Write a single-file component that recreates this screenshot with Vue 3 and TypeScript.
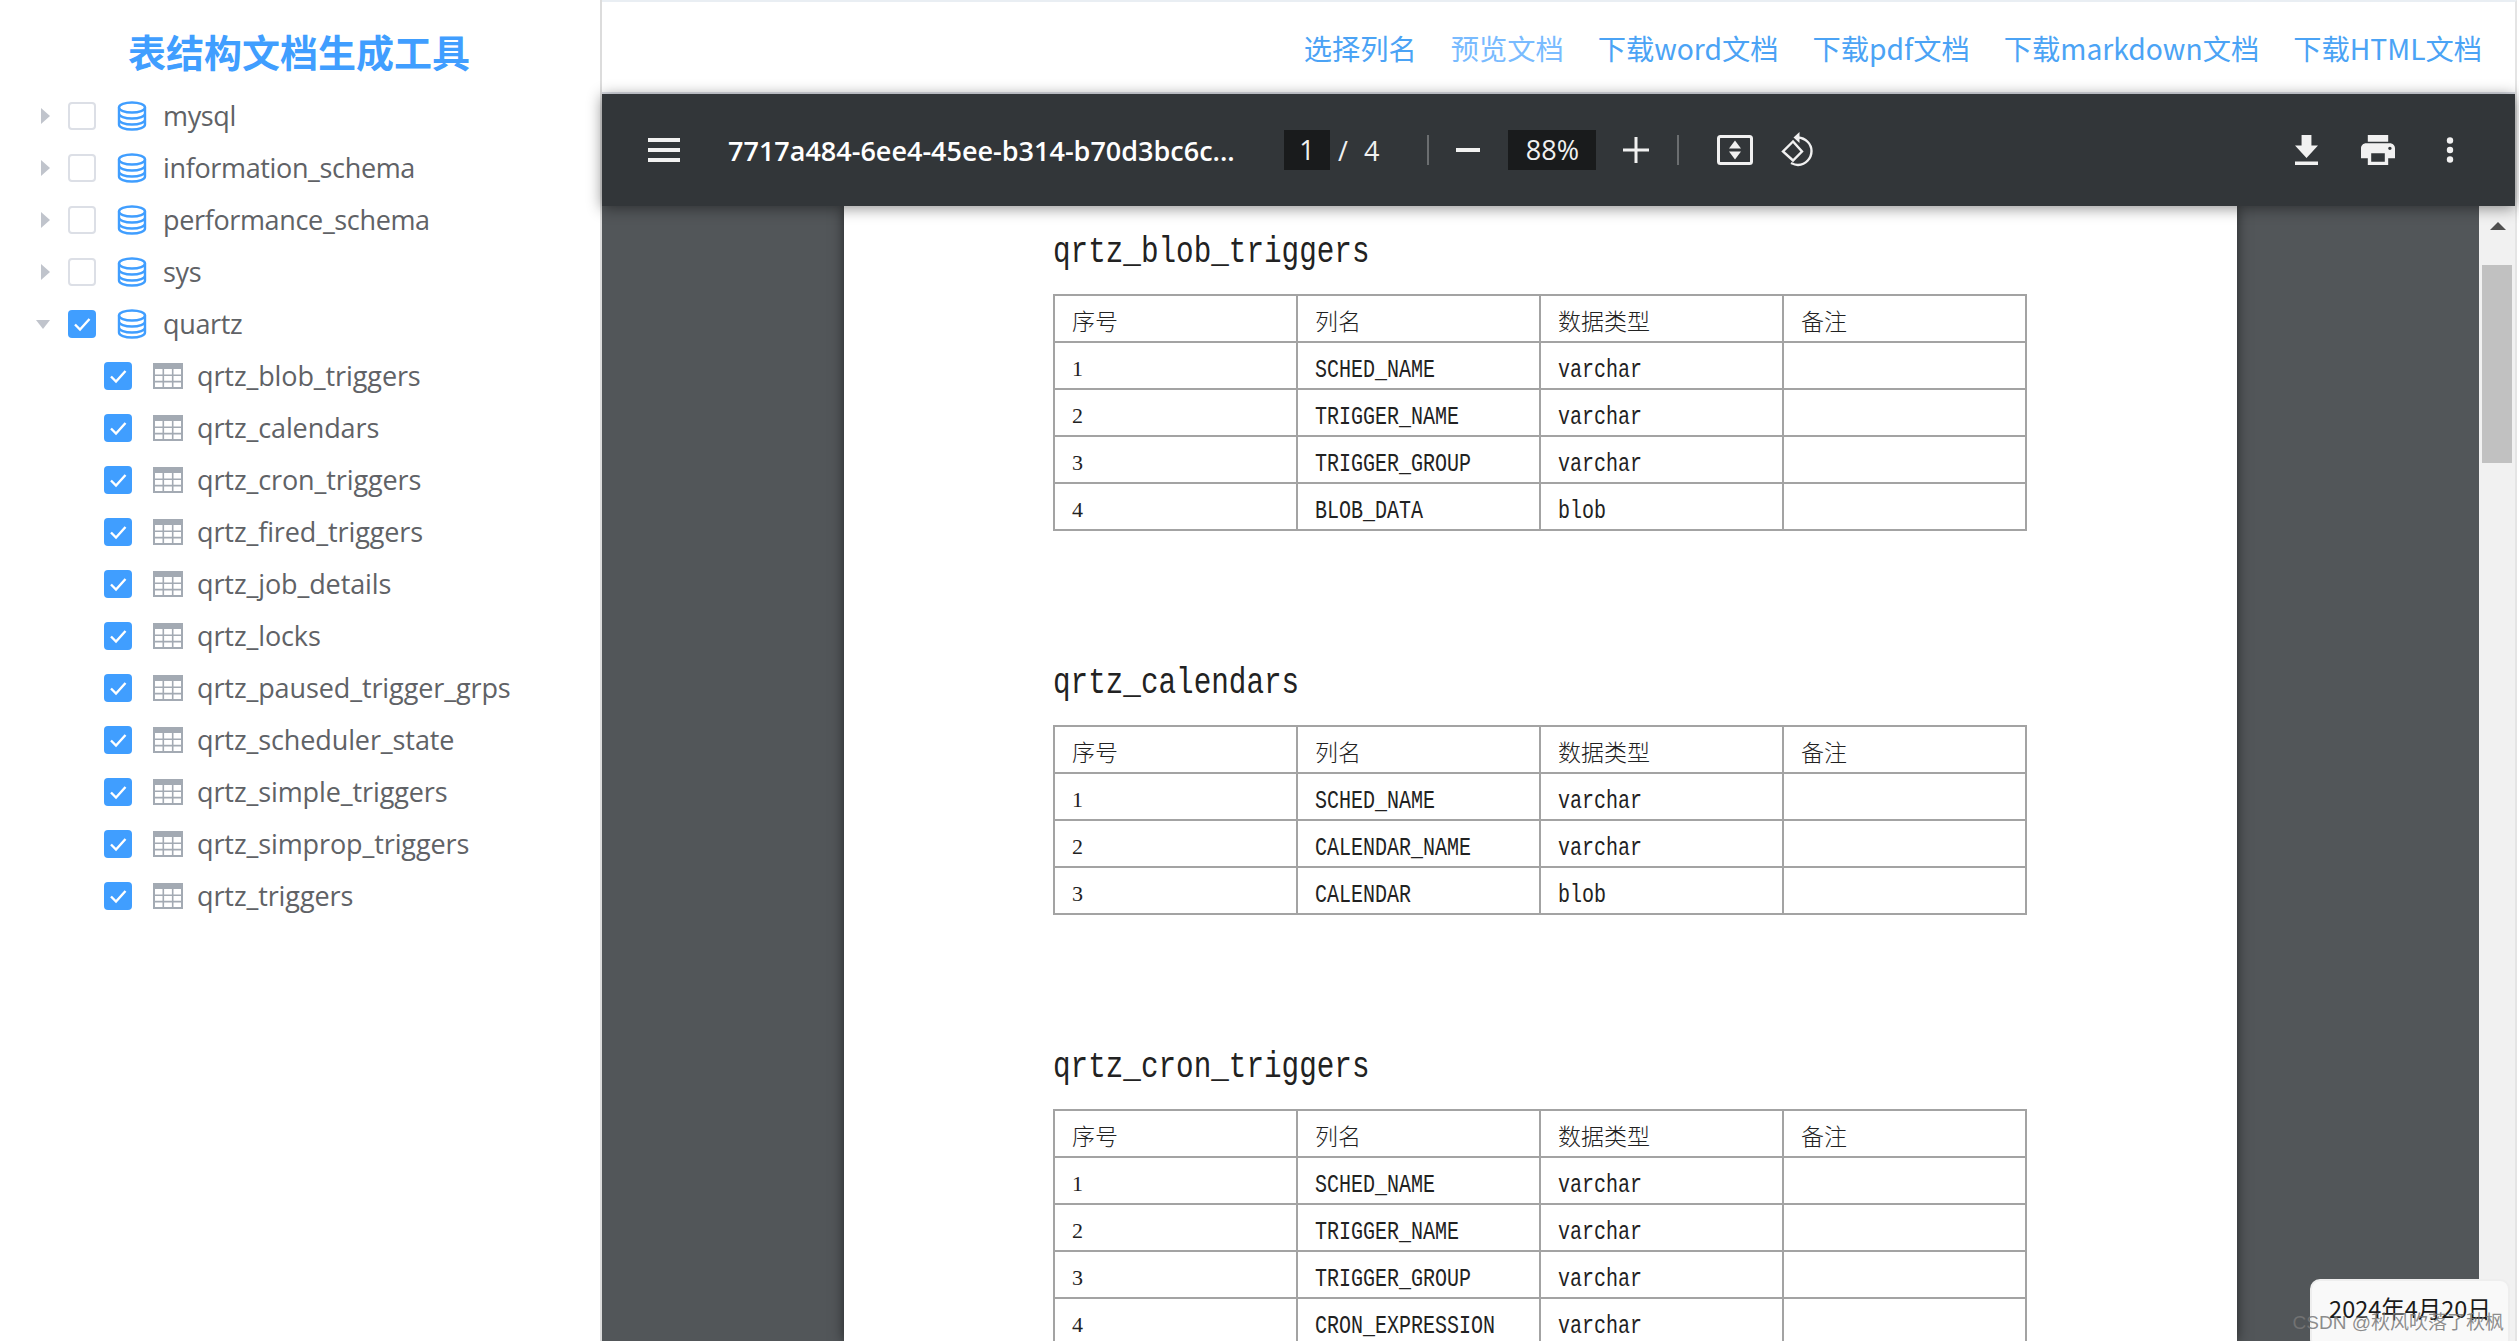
<script setup lang="ts">
// Table structure doc tool: database tree on the left, PDF preview on the right.

interface Section {
  title: string;
  rows: [string, string][];
}

const databases = ["mysql", "information_schema", "performance_schema", "sys"];

const tables = [
  "qrtz_blob_triggers",
  "qrtz_calendars",
  "qrtz_cron_triggers",
  "qrtz_fired_triggers",
  "qrtz_job_details",
  "qrtz_locks",
  "qrtz_paused_trigger_grps",
  "qrtz_scheduler_state",
  "qrtz_simple_triggers",
  "qrtz_simprop_triggers",
  "qrtz_triggers",
];

const links = ["选择列名", "预览文档", "下载word文档", "下载pdf文档", "下载markdown文档", "下载HTML文档"];

const sections: Section[] = [
  {
    title: "qrtz_blob_triggers",
    rows: [
      ["SCHED_NAME", "varchar"],
      ["TRIGGER_NAME", "varchar"],
      ["TRIGGER_GROUP", "varchar"],
      ["BLOB_DATA", "blob"],
    ],
  },
  {
    title: "qrtz_calendars",
    rows: [
      ["SCHED_NAME", "varchar"],
      ["CALENDAR_NAME", "varchar"],
      ["CALENDAR", "blob"],
    ],
  },
  {
    title: "qrtz_cron_triggers",
    rows: [
      ["SCHED_NAME", "varchar"],
      ["TRIGGER_NAME", "varchar"],
      ["TRIGGER_GROUP", "varchar"],
      ["CRON_EXPRESSION", "varchar"],
    ],
  },
];
</script>

<template>
  <div class="app">
    <aside class="sidebar">
      <h1 class="title">表结构文档生成工具</h1>
      <ul class="tree">
        <li v-for="db in databases" :key="db" class="node">
          <span class="caret"></span>
          <span class="check"></span>
          <svg class="db" viewBox="0 0 30 30" fill="none" stroke="#409eff" stroke-width="2.4">
            <ellipse cx="15" cy="6.5" rx="13" ry="5" />
            <path d="M2 6.5v17c0 2.8 5.8 5 13 5s13-2.200 13-5v-17M2 12.500c0 2.800 5.800 5 13 5s13-2.200 13-5M2 18.500c0 2.800 5.800 5 13 5s13-2.200 13-5" />
          </svg>
          <span class="label parent">{{ db }}</span>
        </li>
        <li class="node">
          <span class="caret open"></span>
          <span class="check on">
            <svg viewBox="0 0 28 28" fill="none" stroke="#fff" stroke-width="2.400"><path d="M7 14.500l5 5 9.500-10.500" /></svg>
          </span>
          <svg class="db" viewBox="0 0 30 30" fill="none" stroke="#409eff" stroke-width="2.4">
            <ellipse cx="15" cy="6.5" rx="13" ry="5" />
            <path d="M2 6.5v17c0 2.8 5.8 5 13 5s13-2.200 13-5v-17M2 12.500c0 2.800 5.800 5 13 5s13-2.200 13-5M2 18.500c0 2.800 5.800 5 13 5s13-2.200 13-5" />
          </svg>
          <span class="label parent">quartz</span>
        </li>
        <li v-for="t in tables" :key="t" class="node child">
          <span class="check on">
            <svg viewBox="0 0 28 28" fill="none" stroke="#fff" stroke-width="2.400"><path d="M7 14.500l5 5 9.500-10.500" /></svg>
          </span>
          <svg class="grid" viewBox="0 0 30 26">
            <rect x="1" y="1" width="28" height="24" fill="none" stroke="#a3aab3" stroke-width="2" />
            <rect x="0" y="0" width="30" height="6" fill="#a3aab3" />
            <path d="M10.300 6v19M19.700 6v19M1 12.300h28M1 18.600h28" stroke="#a3aab3" stroke-width="1.600" />
          </svg>
          <span class="label">{{ t }}</span>
        </li>
      </ul>
    </aside>

    <main class="main">
      <nav class="links">
        <a v-for="(l, i) in links" :key="l" class="link" :class="{ muted: i === 1 }">{{ l }}</a>
      </nav>

      <div class="viewer">
        <header class="toolbar">
          <svg class="menu" viewBox="0 0 32 24" fill="#f1f1f1"><path d="M0 0h32v4H0zM0 10h32v4H0zM0 20h32v4H0z" /></svg>
          <span class="filename">7717a484-6ee4-45ee-b314-b70d3bc6c...</span>
          <span class="page-box">1</span>
          <span class="slash">/</span>
          <span class="count">4</span>
          <span class="sep first"></span>
          <svg class="zoom-out" viewBox="0 0 24 4" fill="#f1f1f1"><path d="M0 0h24v4H0z" /></svg>
          <span class="zoom-box">88%</span>
          <svg class="zoom-in" viewBox="0 0 26 26" fill="#f1f1f1"><path d="M11.500 0h3v11.500H26v3H14.500V26h-3V14.500H0v-3h11.500z" /></svg>
          <span class="sep second"></span>
          <svg class="fit" viewBox="0 0 36 30">
            <rect x="1.500" y="1.500" width="33" height="27" rx="2" fill="none" stroke="#f1f1f1" stroke-width="3" />
            <path d="M18 5.500l6 8H12zM18 24.500l-6-8h12z" fill="#f1f1f1" />
          </svg>
          <svg class="rotate" viewBox="0 0 36 36" fill="none" stroke="#f1f1f1" stroke-width="2.400">
            <path d="M13 9.500L3 19.500l10 9 9-9z" />
            <path d="M18 5.500c7.500.5 13.500 6.300 13.500 13.500S26 32.500 18 33c-3 0-5-1-7-2" />
            <path d="M19.500 0v11L13.500 5.500z" fill="#f1f1f1" stroke="none" />
          </svg>
          <span class="spacer"></span>
          <svg class="download" viewBox="5 3 14 17" preserveAspectRatio="none" fill="#f1f1f1"><path d="M19 9h-4V3H9v6H5l7 7 7-7zM5 18v2h14v-2H5z" /></svg>
          <svg class="print" viewBox="2 3 20 18" preserveAspectRatio="none" fill="#f1f1f1"><path d="M19 8H5c-1.660 0-3 1.340-3 3v6h4v4h12v-4h4v-6c0-1.660-1.340-3-3-3zm-3 11H8v-5h8v5zm3-7c-.55 0-1-.45-1-1s.45-1 1-1 1 .45 1 1-.45 1-1 1zm-1-9H6v4h12V3z" /></svg>
          <svg class="more" viewBox="0 0 8 26" fill="#f1f1f1"><circle cx="4" cy="3.500" r="3.200" /><circle cx="4" cy="13" r="3.200" /><circle cx="4" cy="22.500" r="3.200" /></svg>
        </header>

        <div class="body">
          <div class="canvas">
            <div class="page">
              <section v-for="s in sections" :key="s.title" class="section">
                <h2 class="doc-title"><span class="tall">{{ s.title }}</span></h2>
                <table class="doc-table">
                  <thead>
                    <tr>
                      <th>序号</th>
                      <th>列名</th>
                      <th>数据类型</th>
                      <th>备注</th>
                    </tr>
                  </thead>
                  <tbody>
                    <tr v-for="(r, i) in s.rows" :key="r[0]">
                      <td class="num">{{ i + 1 }}</td>
                      <td class="mono"><span class="tall">{{ r[0] }}</span></td>
                      <td class="mono"><span class="tall">{{ r[1] }}</span></td>
                      <td></td>
                    </tr>
                  </tbody>
                </table>
              </section>
            </div>
          </div>
          <div class="scrollbar">
            <span class="arrow"></span>
            <span class="thumb"></span>
          </div>
        </div>
      </div>
    </main>

    <div class="date">2024年4月20日</div>
    <div class="watermark">CSDN @秋风吹落了秋枫</div>
  </div>
</template>

<style>
html,
body {
  margin: 0;
  background: #fff;
  overflow: hidden;
}
</style>

<style scoped>
.app {
  position: relative;
  display: flex;
  width: 2519px;
  height: 1341px;
  overflow: hidden;
  background: #fff;
  font-family: "Open Sans", "Noto Sans CJK SC", sans-serif;
}

.sidebar {
  width: 600px;
  flex-shrink: 0;
  border-right: 2px solid #dcdcdc;
}
.title {
  margin: 0;
  height: 90px;
  padding-right: 2px;
  text-align: center;
  color: #409eff;
  font: 700 38px/101px "Noto Sans CJK SC", sans-serif;
}
.tree {
  list-style: none;
  margin: 0;
  padding: 0;
}
.node {
  display: flex;
  align-items: center;
  height: 52px;
  padding-left: 41px;
}
.node.child {
  padding-left: 104px;
}
.caret {
  width: 0;
  height: 0;
  margin-right: 18px;
  border-style: solid;
  border-width: 8px 0 8px 9px;
  border-color: transparent transparent transparent #c0c4cc;
}
.caret.open {
  margin-left: -5px;
  margin-right: 18px;
  border-width: 9px 7.500px 0 7.500px;
  border-color: #c0c4cc transparent transparent transparent;
}
.check {
  box-sizing: border-box;
  width: 28px;
  height: 28px;
  flex-shrink: 0;
  border: 2px solid #dcdfe6;
  border-radius: 4px;
}
.check.on {
  border: 0;
  background: #409eff;
}
.check svg {
  display: block;
}
.db {
  width: 30px;
  height: 30px;
  margin-left: 21px;
  margin-right: 16px;
}
.grid {
  width: 30px;
  height: 26px;
  margin-left: 21px;
  margin-right: 14px;
}
.label {
  position: relative;
  top: -1px;
  color: #606266;
  font-size: 27px;
  letter-spacing: -0.1px;
  white-space: nowrap;
}
.label.parent {
  letter-spacing: -0.35px;
}

.main {
  display: flex;
  flex-direction: column;
  width: 1915px;
  flex-shrink: 0;
  border-top: 2px solid #e9eef3;
  border-right: 2px solid #e4e4e4;
  box-sizing: border-box;
}
.links {
  display: flex;
  justify-content: flex-end;
  align-items: center;
  gap: 34px;
  height: 90px;
  padding-right: 33px;
  border-bottom: 2px solid #dcdfe6;
}
.link {
  color: #4ba3f5;
  font: 400 28.250px "Noto Sans CJK SC", sans-serif;
  white-space: nowrap;
}
.link.muted {
  color: #79bbff;
}

.viewer {
  display: flex;
  flex-direction: column;
  flex: 1;
  min-height: 0;
}
.toolbar {
  position: relative;
  z-index: 1;
  display: flex;
  align-items: center;
  height: 112px;
  padding-left: 46px;
  background: #323639;
  box-shadow: 0 2px 14px rgba(0, 0, 0, 0.45);
  color: #f1f1f1;
  font-family: "Open Sans", sans-serif;
  font-size: 27px;
}
.menu {
  width: 32px;
  height: 24px;
  margin-right: 48px;
}
.filename {
  width: 556px;
  flex-shrink: 0;
  font-weight: 600;
  color: #fff;
  white-space: nowrap;
}
.page-box {
  width: 46px;
  height: 40px;
  line-height: 40px;
  text-align: center;
  background: #191b1c;
}
.slash {
  margin-left: 8px;
}
.count {
  margin-left: 16px;
}
.sep {
  width: 2px;
  height: 30px;
  background: #6b6e70;
}
.sep.first {
  margin-left: 48px;
}
.zoom-out {
  width: 24px;
  height: 4px;
  margin-left: 27px;
}
.zoom-box {
  width: 88px;
  height: 40px;
  margin-left: 28px;
  line-height: 40px;
  text-align: center;
  background: #191b1c;
}
.zoom-in {
  width: 26px;
  height: 26px;
  margin-left: 27px;
}
.sep.second {
  margin-left: 28px;
}
.fit {
  width: 36px;
  height: 30px;
  margin-left: 38px;
}
.rotate {
  width: 36px;
  height: 36px;
  margin-left: 27px;
}
.spacer {
  flex: 1;
}
.download {
  width: 23px;
  height: 30px;
}
.print {
  width: 34px;
  height: 30px;
  margin-left: 43px;
}
.more {
  width: 8px;
  height: 26px;
  margin-left: 51px;
  margin-right: 61px;
}

.body {
  display: flex;
  flex: 1;
  min-height: 0;
}
.canvas {
  display: flex;
  justify-content: center;
  flex: 1;
  min-width: 0;
  overflow: hidden;
  background: #525659;
}
.page {
  box-sizing: border-box;
  width: 1393px;
  flex-shrink: 0;
  padding-left: 209px;
  background: #fff;
  box-shadow: 0 0 12px rgba(0, 0, 0, 0.55);
}
.section {
  margin-bottom: 106px;
}
.tall {
  display: inline-block;
  transform: scaleY(1.25);
}
.doc-title {
  margin: 0;
  height: 88px;
  color: #222;
  font: 400 29.300px/94px "Liberation Mono", monospace;
}
.doc-table {
  width: 974px;
  border-collapse: collapse;
  table-layout: fixed;
  color: #222;
}
.doc-table th,
.doc-table td {
  height: 47px;
  box-sizing: border-box;
  padding: 7px 0 0 17px;
  border: 2px solid #a3a3a3;
  text-align: left;
  font-weight: 400;
}
.doc-table th {
  padding-top: 3px;
  font: 300 23px "Noto Sans CJK SC", sans-serif;
}
.doc-table .mono {
  padding-top: 10px;
  font: 400 20px "Liberation Mono", monospace;
}
.doc-table .num {
  font: 400 22px "Liberation Serif", serif;
}

.scrollbar {
  position: relative;
  width: 36px;
  flex-shrink: 0;
  background: #f1f1f1;
}
.arrow {
  position: absolute;
  top: 16px;
  left: 11px;
  width: 0;
  height: 0;
  border-style: solid;
  border-width: 0 8px 8px 8px;
  border-color: transparent transparent #505050 transparent;
}
.thumb {
  position: absolute;
  top: 59px;
  left: 3px;
  width: 30px;
  height: 198px;
  background: #c1c1c1;
}

.date {
  position: absolute;
  right: 9px;
  bottom: -8px;
  box-sizing: border-box;
  width: 200px;
  height: 70px;
  padding-top: 10px;
  border: 2px solid #eeeeee;
  border-radius: 10px;
  background: #f9f9f9;
  color: #1a1a1a;
  text-align: center;
  font: 400 23.500px "Noto Sans CJK SC", sans-serif;
}
.watermark {
  position: absolute;
  right: 15px;
  bottom: 7px;
  color: rgba(120, 120, 120, 0.85);
  font: 400 19px "Liberation Sans", "Noto Sans CJK SC", sans-serif;
  white-space: nowrap;
}
</style>
